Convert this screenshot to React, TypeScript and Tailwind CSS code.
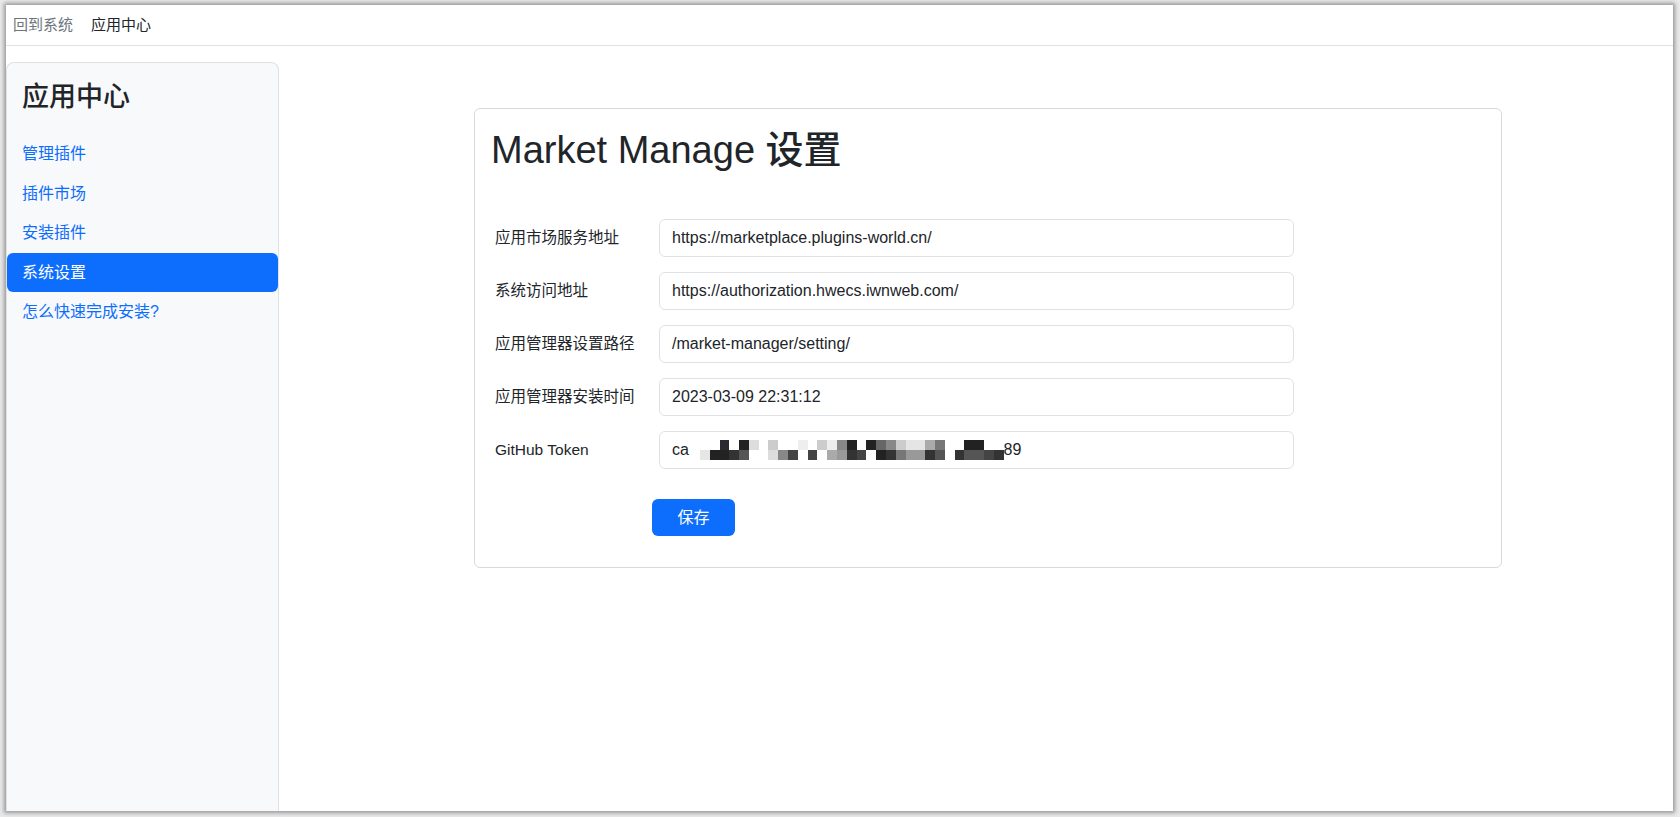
const navItems = ['管理插件', '插件市场', '安装插件', '系统设置', '怎么快速完成安装?'];

const fields = [
  { label: '应用市场服务地址', value: 'https://marketplace.plugins-world.cn/' },
  { label: '系统访问地址', value: 'https://authorization.hwecs.iwnweb.com/' },
  { label: '应用管理器设置路径', value: '/market-manager/setting/' },
  { label: '应用管理器安装时间', value: '2023-03-09 22:31:12' },
];

// pixelated token: [top row, bottom row] per column
const mosaic: [string, string][] = [
  ['bg-transparent', 'bg-[#e6e6e6]'],
  ['bg-transparent', 'bg-[#222]'],
  ['bg-[#2a2a30]', 'bg-[#222]'],
  ['bg-transparent', 'bg-[#333]'],
  ['bg-[#222]', 'bg-[#555]'],
  ['bg-[#ddd]', 'bg-transparent'],
  ['bg-transparent', 'bg-transparent'],
  ['bg-[#ccc]', 'bg-[#ddd]'],
  ['bg-transparent', 'bg-[#888]'],
  ['bg-transparent', 'bg-[#444]'],
  ['bg-[#eee]', 'bg-transparent'],
  ['bg-transparent', 'bg-[#444]'],
  ['bg-[#ccc]', 'bg-transparent'],
  ['bg-[#eee]', 'bg-[#aaa]'],
  ['bg-[#888]', 'bg-[#999]'],
  ['bg-[#222]', 'bg-[#333]'],
  ['bg-transparent', 'bg-[#444]'],
  ['bg-[#222]', 'bg-transparent'],
  ['bg-[#666]', 'bg-[#222]'],
  ['bg-[#888]', 'bg-[#333]'],
  ['bg-[#ccc]', 'bg-[#777]'],
  ['bg-[#e5e5e5]', 'bg-[#999]'],
  ['bg-[#e5e5e5]', 'bg-[#999]'],
  ['bg-[#aaa]', 'bg-[#333]'],
  ['bg-[#777]', 'bg-[#555]'],
  ['bg-transparent', 'bg-transparent'],
  ['bg-transparent', 'bg-[#333]'],
  ['bg-[#222]', 'bg-[#555]'],
  ['bg-[#222]', 'bg-[#555]'],
  ['bg-transparent', 'bg-[#444]'],
  ['bg-transparent', 'bg-[#333]'],
];

function FieldRow({ label, children }: { label: string; children: React.ReactNode }) {
  return (
    <div className="flex items-center">
      <label className="w-[168px] shrink-0 pl-[4px] text-[15.5px] text-[#212529]">{label}</label>
      <div className="flex h-[38px] w-[635px] items-center rounded-[6px] border border-[#dee2e6] bg-white px-[12px] text-[16px] text-[#212529]">
        {children}
      </div>
    </div>
  );
}

export default function App() {
  return (
    <div
      className="h-[817px] w-[1680px] overflow-hidden bg-[#e9e9e9] pb-[6px] pl-[6px] pr-[7px] pt-[5px]"
      style={{ fontFamily: '"Liberation Sans", "Noto Sans CJK SC", sans-serif' }}
    >
      <div className="flex h-full flex-col bg-white shadow-[0_0_4px_2px_rgba(0,0,0,0.35)]">
        <header className="flex h-[41px] shrink-0 items-center gap-[18px] border-b border-[#dee2e6] px-[7px] text-[15px]">
          <a className="text-[#6c757d]">回到系统</a>
          <a className="text-[#212529]">应用中心</a>
        </header>

        <div className="flex min-h-0 flex-1">
          <aside className="mt-[16px] w-[273px] shrink-0 rounded-t-[8px] border border-b-0 border-[#dee2e6] bg-[#f8f9fa]">
            <h3 className="px-[15px] pt-[18px] text-[27px] font-medium leading-[1.2] text-[#212529]">应用中心</h3>
            <nav className="mt-[21px] flex flex-col">
              {navItems.map((item) => (
                <a
                  key={item}
                  className={
                    item === '系统设置'
                      ? 'flex h-[39.5px] items-center rounded-[6px] bg-[#0d6efd] px-[15px] text-[16px] text-white'
                      : 'flex h-[39.5px] items-center px-[15px] text-[16px] text-[#0d6efd]'
                  }
                >
                  {item}
                </a>
              ))}
            </nav>
          </aside>

          <main className="flex-1 pl-[195px] pt-[62px]">
            <section className="w-[1028px] rounded-[6px] border border-[#d8dadc] px-[16px] pb-[31px] pt-[19px]">
              <h1 className="text-[38px] font-medium leading-[1.2] text-[#212529]">Market Manage 设置</h1>

              <form className="mt-[45px] flex flex-col gap-[15px]">
                {fields.map((f) => (
                  <FieldRow key={f.label} label={f.label}>
                    {f.value}
                  </FieldRow>
                ))}
                <FieldRow label="GitHub Token">
                  <span>ca</span>
                  <span className="ml-[11px] flex">
                    {mosaic.map(([top, bottom], i) => (
                      <span key={i} className="flex flex-col">
                        <span className={`h-[10px] w-[9.8px] ${top}`} />
                        <span className={`h-[10px] w-[9.8px] ${bottom}`} />
                      </span>
                    ))}
                  </span>
                  <span>89</span>
                </FieldRow>
              </form>

              <button
                type="button"
                className="ml-[161px] mt-[30.5px] flex h-[37px] w-[83px] items-center justify-center rounded-[6px] bg-[#0d6efd] text-[16px] text-white"
              >
                保存
              </button>
            </section>
          </main>
        </div>
      </div>
    </div>
  );
}
